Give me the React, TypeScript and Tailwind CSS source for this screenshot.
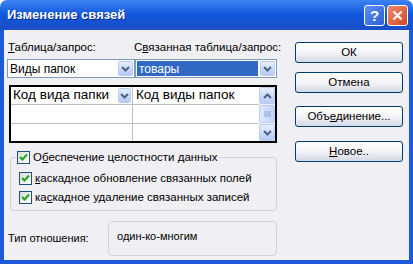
import React from "react";

const UI = "font-['Liberation_Sans',Arial,sans-serif]";

function Chevron({ up = false }: { up?: boolean }) {
  return (
    <svg width="9" height="6" viewBox="0 0 9 6" aria-hidden="true">
      <path
        d={up ? "M1 5 L4.5 1.5 L8 5" : "M1 1 L4.5 4.5 L8 1"}
        fill="none"
        stroke="#4d6185"
        strokeWidth="2"
      />
    </svg>
  );
}

function DropButton({ className = "" }: { className?: string }) {
  return (
    <div
      className={`flex items-center justify-center rounded-[2px] border border-[#bccbf0] bg-gradient-to-b from-[#e6eeff] to-[#b7caf5] ${className}`}
    >
      <Chevron />
    </div>
  );
}

function Check() {
  return (
    <div className="flex h-[13px] w-[13px] shrink-0 items-center justify-center border border-[#1c5180] bg-gradient-to-br from-[#dcdcd7] to-white">
      <svg width="9" height="9" viewBox="0 0 9 9" aria-hidden="true">
        <path d="M1 4 L3.5 6.5 L8 1.5" fill="none" stroke="#21a121" strokeWidth="2" />
      </svg>
    </div>
  );
}

function XpButton({ children }: { children: React.ReactNode }) {
  return (
    <div
      className="
        flex
        h-[21px]
        w-[108px]
        items-center
        justify-center
        rounded-[3px]
        border border-[#003c74]
        bg-gradient-to-b
        from-white
        via-[#f4f4f8]
        to-[#d3d8e6]
        text-[11.5px]
        text-black
      "
    >
      {children}
    </div>
  );
}

export default function App() {
  return (
    <div className={`flex h-[264px] w-[413px] flex-col ${UI}`}>
      {/* Title bar */}
      <div
        className="
          flex
          h-[30px]
          shrink-0
          items-center
          justify-between
          rounded-t-[7px]
          bg-gradient-to-b
          from-[#3d82f0]
          via-[#0e56de]
          to-[#1b4fc4]
          pl-[7px]
          pr-[5px]
        "
      >
        <span className="text-[13px] font-bold text-white [text-shadow:1px_1px_0_#0a2a8a]">
          Изменение связей
        </span>
        <div className="flex gap-[2px]">
          <div className="flex h-[21px] w-[21px] items-center justify-center rounded-[3px] border border-white bg-gradient-to-br from-[#5d8ff3] to-[#2a5fd8] text-[15px] font-bold leading-none text-white">
            ?
          </div>
          <div className="flex h-[21px] w-[21px] items-center justify-center rounded-[3px] border border-white bg-gradient-to-br from-[#eb8a6a] to-[#d3471f]">
            <svg width="11" height="11" viewBox="0 0 11 11" aria-hidden="true">
              <path d="M1.5 1.5 L9.5 9.5 M9.5 1.5 L1.5 9.5" stroke="white" strokeWidth="2.2" />
            </svg>
          </div>
        </div>
      </div>

      {/* Body */}
      <div className="flex flex-1 overflow-hidden border-x-4 border-b-4 border-[#1d5ad9] bg-[#f0eff4] text-[11px] text-black">
        {/* Left column */}
        <div className="ml-[3px] flex w-[270px] flex-col">
          <div className="mt-[10px] grid grid-cols-[127px_143px] whitespace-nowrap text-[11.5px] leading-[14px]">
            <span className="pl-[1px]">
              <u>Т</u>аблица/запрос:
            </span>
            <span>
              С<u>в</u>язанная таблица/запрос:
            </span>
          </div>

          {/* Combos */}
          <div className="mt-[5px] flex h-[19px] text-[12px]">
            <div className="flex w-[128px] items-center border border-[#7f9db9] bg-white pl-[2px]">
              <span className="flex-1">Виды папок</span>
              <DropButton className="mr-[1px] h-[15px] w-[15px]" />
            </div>
            <div className="flex w-[142px] items-center border border-[#7f9db9] bg-white pl-[1px]">
              <span className="flex h-[15px] flex-1 items-center bg-[#316ac5] pl-[2px] text-white">товары</span>
              <DropButton className="ml-[2px] mr-[1px] h-[15px] w-[15px]" />
            </div>
          </div>

          {/* Fields grid */}
          <div className="ml-[2px] mt-[7px] flex h-[58px] border-2 border-black bg-white text-[13.5px]">
            <div className="flex flex-1 flex-col">
              <div className="flex h-[18px] border-b border-[#c0c0c0]">
                <div className="flex w-[122px] items-center border-r border-[#c0c0c0] pl-[2px]">
                  <span className="flex-1">Код вида папки</span>
                  <DropButton className="mr-[1px] h-[15px] w-[13px]" />
                </div>
                <div className="flex flex-1 items-center pl-[3px]">Код виды папок</div>
              </div>
              <div className="flex h-[19px] border-b border-[#c0c0c0]">
                <div className="w-[122px] border-r border-[#c0c0c0]" />
                <div className="flex-1" />
              </div>
              <div className="flex flex-1">
                <div className="w-[122px] border-r border-[#c0c0c0]" />
                <div className="flex-1" />
              </div>
            </div>
            {/* Scrollbar */}
            <div className="flex w-[16px] flex-col bg-[#f3f1f6]">
              <div className="flex h-[17px] items-center justify-center rounded-[2px] border border-[#bccbf0] bg-gradient-to-b from-[#e6eeff] to-[#b7caf5]">
                <Chevron up />
              </div>
              <div className="mt-[1px] flex h-[18px] items-center justify-center rounded-[2px] border border-[#bccbf0] bg-gradient-to-r from-[#dfe8fd] to-[#c1d3fa]">
                <svg width="7" height="7" viewBox="0 0 7 7" aria-hidden="true">
                  <path d="M0 1 H7 M0 3 H7 M0 5 H7" stroke="#8ba3d8" strokeWidth="1" />
                </svg>
              </div>
              <div className="flex-1" />
              <div className="flex h-[17px] items-center justify-center rounded-[2px] border border-[#bccbf0] bg-gradient-to-b from-[#e6eeff] to-[#b7caf5]">
                <Chevron />
              </div>
            </div>
          </div>

          {/* Integrity group */}
          <fieldset className="ml-[3px] mt-[7px] h-[61px] rounded-[4px] border border-[#d3d1dc] pl-[8px] text-[11.5px]">
            <legend className="-ml-[3px] flex items-center gap-[3px] px-[1px] leading-[14px]">
              <Check />
              <span>
                О<u>б</u>еспечение целостности данных
              </span>
            </legend>
            <div className="mt-[7px] flex items-center gap-[3px] leading-[14px]">
              <Check />
              <span>
                <u>к</u>аскадное обновление связанных полей
              </span>
            </div>
            <div className="mt-[5px] flex items-center gap-[3px] leading-[14px]">
              <Check />
              <span>
                ка<u>с</u>кадное удаление связанных записей
              </span>
            </div>
          </fieldset>

          {/* Relationship type */}
          <div className="mt-[10px] flex">
            <span className="mt-[10px] w-[101px] pl-[1px] leading-[14px]">Тип отношения:</span>
            <div className="h-[35px] flex-1 rounded-[4px] border border-[#d3d1dc] pl-[8px] pt-[7px] leading-[14px]">
              один-ко-многим
            </div>
          </div>
        </div>

        {/* Right column */}
        <div className="ml-[18px] flex flex-col">
          <div className="mt-[12px]">
            <XpButton>ОК</XpButton>
          </div>
          <div className="mt-[9px]">
            <XpButton>Отмена</XpButton>
          </div>
          <div className="mt-[13px]">
            <XpButton>
              <span>
                Объ<u>е</u>динение...
              </span>
            </XpButton>
          </div>
          <div className="mt-[14px]">
            <XpButton>
              <span>
                <u>Н</u>овое..
              </span>
            </XpButton>
          </div>
        </div>
      </div>
    </div>
  );
}
